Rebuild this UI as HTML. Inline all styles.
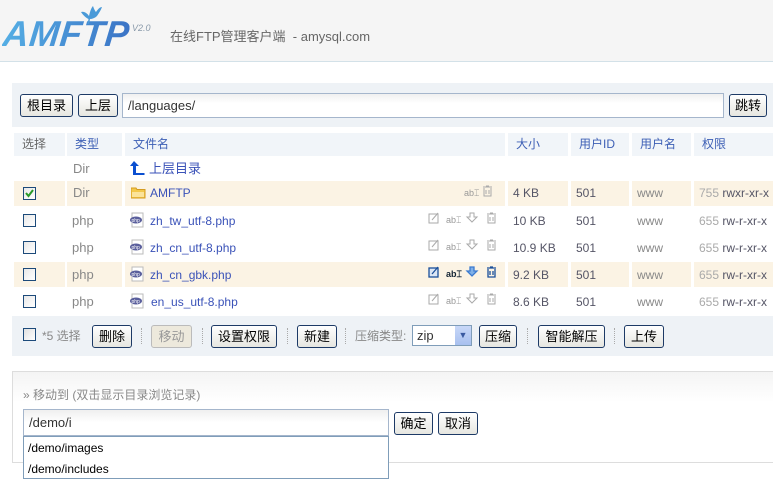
<!DOCTYPE html>
<html><head><meta charset="utf-8"><style>
*{margin:0;padding:0;box-sizing:border-box}
body{width:773px;height:497px;overflow:hidden;background:#fff;font-family:"Liberation Sans","Noto Sans CJK SC",sans-serif;font-size:12px;color:#333;position:relative}
.abs{position:absolute}
.hdr{left:0;top:0;width:773px;height:62px;background:#f5f5f5;border-bottom:1px solid #d3e1e8}
.logo{left:3px;top:14px;font-size:36px;font-weight:bold;font-style:italic;letter-spacing:0.5px;font-family:"Liberation Sans",sans-serif;line-height:40px;background:linear-gradient(90deg,#55aee4,#3b74c6);-webkit-background-clip:text;color:transparent;transform:skewX(-6deg)}
.btn{position:absolute;height:23px;border:1px solid #1d3a66;border-radius:3px;background:linear-gradient(#fff,#e6e6e0);font-size:13px;color:#000;text-align:center;line-height:21px}
.bar{background:#eef2f6}
.th{position:absolute;top:133px;height:23px;background:#f1f5f9;line-height:23px;padding-left:8px;color:#3d5fb5}
.hl{position:absolute;height:25px;background:#fbf3e4}
.cell{position:absolute;line-height:16px}
.g{color:#888}.b{color:#3a52b8}.s{color:#556}
.cb{position:absolute;left:23px;width:13px;height:13px;border:1px solid #1c4a7a;background:linear-gradient(135deg,#e8e8e8,#fff)}
.sep{position:absolute;top:328px;width:1px;height:16px;border-left:1px dotted #aaa}
</style></head><body>
<div class="abs hdr"></div>
<div class="abs logo">AMFTP</div>
<svg class="abs" style="left:78px;top:3px" width="26" height="22" viewBox="0 0 26 22"><path d="M3 9 C6 8 9 10 11 13 C12 9 13 5 15 3 C16 6 17 8 18 9 C20 6 22 4 24 4 C23 7 21 10 19 13 C17 15 14 16 12 16 L11 21 L9.5 21 L10.5 16 C8 15 5 12 3 9Z" fill="#4a9ad8"/></svg>
<div class="abs" style="left:132px;top:23px;font-size:9px;color:#8a9aaa;font-style:italic">V2.0</div>
<div class="abs" style="left:170px;top:26px;font-size:13px;color:#666">在线FTP管理客户端 &nbsp;- amysql.com</div>

<div class="abs bar" style="left:12px;top:83px;width:761px;height:44px"></div>
<div class="btn" style="left:20px;top:94px;width:53px">根目录</div>
<div class="btn" style="left:78px;top:94px;width:40px">上层</div>
<div class="abs" style="left:122px;top:93px;width:602px;height:25px;border:1px solid #a5b6cc;background:linear-gradient(#f0f0f0,#fff 40%);padding:4px 5px;font-size:13px;color:#333">/languages/</div>
<div class="btn" style="left:729px;top:94px;width:38px">跳转</div>

<div class="th" style="left:14px;width:51px;color:#666">选择</div>
<div class="th" style="left:67px;width:55px">类型</div>
<div class="th" style="left:125px;width:380px">文件名</div>
<div class="th" style="left:508px;width:60px">大小</div>
<div class="th" style="left:571px;width:58px">用户ID</div>
<div class="th" style="left:632px;width:59px">用户名</div>
<div class="th" style="left:694px;width:79px">权限</div>

<div class="cell g" style="left:73px;top:161px;font-size:13px">Dir</div>
<svg class="abs" style="left:129px;top:160px" width="18" height="16"><path d="M5 1 L10 6 L7 6 L7 13 L14 13 L14 15 L4 15 L4 6 L1 6Z" fill="#0b4fd0"/><rect x="11" y="13" width="1.5" height="2" fill="#0b4fd0"/><rect x="14" y="13" width="1.5" height="2" fill="#0b4fd0"/></svg>
<div class="cell b" style="left:149px;top:161px;font-size:13px">上层目录</div>

<div class="hl" style="left:14px;top:181px;width:51px"></div><div class="hl" style="left:67px;top:181px;width:55px"></div><div class="hl" style="left:125px;top:181px;width:380px"></div><div class="hl" style="left:508px;top:181px;width:60px"></div><div class="hl" style="left:571px;top:181px;width:58px"></div><div class="hl" style="left:632px;top:181px;width:59px"></div><div class="hl" style="left:694px;top:181px;width:79px"></div>
<div class="cb" style="top:187px"><svg width="11" height="11" style="position:absolute;left:0;top:0"><path d="M2 5 L4.5 8 L9 2" stroke="#2a9a2a" stroke-width="2" fill="none"/></svg></div>
<div class="cell g" style="left:73px;top:185px;font-size:13px">Dir</div>
<svg class="abs" style="left:131px;top:186px" width="15" height="13"><path d="M0 2 L5 2 L6 3.5 L14 3.5 L14 12 L0 12Z" fill="#f3c84b" stroke="#d49b20"/><rect x="1" y="6" width="12" height="5" fill="#fbe39a"/></svg>
<div class="cell b" style="left:150px;top:185px">AMFTP</div>

<div class="hl" style="left:14px;top:262px;width:51px"></div><div class="hl" style="left:67px;top:262px;width:55px"></div><div class="hl" style="left:125px;top:262px;width:380px"></div><div class="hl" style="left:508px;top:262px;width:60px"></div><div class="hl" style="left:571px;top:262px;width:58px"></div><div class="hl" style="left:632px;top:262px;width:59px"></div><div class="hl" style="left:694px;top:262px;width:79px"></div>

<div class="cb" style="top:214px"></div><div class="cb" style="top:241px"></div><div class="cb" style="top:268px"></div><div class="cb" style="top:295px"></div>

<div class="cell g" style="left:72px;top:213px;font-size:13px">php</div>
<div class="cell g" style="left:72px;top:240px;font-size:13px">php</div>
<div class="cell g" style="left:72px;top:267px;font-size:13px">php</div>
<div class="cell g" style="left:72px;top:294px;font-size:13px">php</div>

<svg class="abs" style="left:129px;top:212px" width="16" height="16"><rect x="3" y="1" width="11" height="14" fill="#fff" stroke="#bbb"/><ellipse cx="7" cy="8" rx="6" ry="3.5" fill="#5a5f9c"/><text x="2.5" y="10" font-size="5" fill="#fff" font-family="Liberation Sans">php</text></svg>
<svg class="abs" style="left:129px;top:239px" width="16" height="16"><rect x="3" y="1" width="11" height="14" fill="#fff" stroke="#bbb"/><ellipse cx="7" cy="8" rx="6" ry="3.5" fill="#5a5f9c"/><text x="2.5" y="10" font-size="5" fill="#fff" font-family="Liberation Sans">php</text></svg>
<svg class="abs" style="left:129px;top:266px" width="16" height="16"><rect x="3" y="1" width="11" height="14" fill="#fff" stroke="#bbb"/><ellipse cx="7" cy="8" rx="6" ry="3.5" fill="#5a5f9c"/><text x="2.5" y="10" font-size="5" fill="#fff" font-family="Liberation Sans">php</text></svg>
<svg class="abs" style="left:129px;top:293px" width="16" height="16"><rect x="3" y="1" width="11" height="14" fill="#fff" stroke="#bbb"/><ellipse cx="7" cy="8" rx="6" ry="3.5" fill="#5a5f9c"/><text x="2.5" y="10" font-size="5" fill="#fff" font-family="Liberation Sans">php</text></svg>

<div class="cell b" style="left:150px;top:213px">zh_tw_utf-8.php</div>
<div class="cell b" style="left:150px;top:240px">zh_cn_utf-8.php</div>
<div class="cell b" style="left:150px;top:267px">zh_cn_gbk.php</div>
<div class="cell b" style="left:151px;top:294px">en_us_utf-8.php</div>

<div class="cell" style="left:464px;top:185px;font-size:9px;color:#999">ab⌶</div>
<svg class="abs" style="left:482px;top:185px" width="11" height="12"><path d="M1 2 H10 M4 1 H7 M2 3 V11 H9 V3 M4 5 V9 M7 5 V9" stroke="#aaa" fill="none"/></svg>

<svg class="abs" style="left:428px;top:211px" width="70" height="96">
<g stroke="#aaa" fill="none">
<rect x="1" y="3" width="9" height="9"/><path d="M4 9 L10 2"/>
<path d="M59 3 H68 M62 2 H65 M60 4 V12 H67 V4 M62 6 V10 M65 6 V10"/>
<path d="M42 2 H46 V6 H49 L44 11 L39 6 H42Z"/>
<g transform="translate(0,27)"><rect x="1" y="3" width="9" height="9"/><path d="M4 9 L10 2"/><path d="M59 3 H68 M62 2 H65 M60 4 V12 H67 V4 M62 6 V10 M65 6 V10"/><path d="M42 2 H46 V6 H49 L44 11 L39 6 H42Z"/></g>
<g transform="translate(0,81)"><rect x="1" y="3" width="9" height="9"/><path d="M4 9 L10 2"/><path d="M59 3 H68 M62 2 H65 M60 4 V12 H67 V4 M62 6 V10 M65 6 V10"/><path d="M42 2 H46 V6 H49 L44 11 L39 6 H42Z"/></g>
</g>
<g transform="translate(0,54)" stroke="#1a4f9a" fill="none" stroke-width="1.3"><rect x="1" y="3" width="9" height="9" fill="#dbe6f5"/><path d="M4 9 L10 2"/><path d="M59 3 H68 M62 2 H65 M60 4 V12 H67 V4 M62 6 V10 M65 6 V10"/><path d="M42 2 H46 V6 H49 L44 11 L39 6 H42Z" fill="#7fb0e8" stroke="#3a7ad0"/></g>
</svg>
<div class="cell" style="left:446px;top:212px;font-size:9px;color:#999">ab⌶</div>
<div class="cell" style="left:446px;top:239px;font-size:9px;color:#999">ab⌶</div>
<div class="cell" style="left:446px;top:266px;font-size:9px;color:#123;font-weight:bold">ab⌶</div>
<div class="cell" style="left:446px;top:293px;font-size:9px;color:#999">ab⌶</div>

<div class="cell s" style="left:513px;top:185px">4 KB</div>
<div class="cell s" style="left:513px;top:213px">10 KB</div>
<div class="cell s" style="left:513px;top:240px">10.9 KB</div>
<div class="cell s" style="left:513px;top:267px">9.2 KB</div>
<div class="cell s" style="left:513px;top:294px">8.6 KB</div>
<div class="cell s" style="left:576px;top:185px">501</div>
<div class="cell s" style="left:576px;top:213px">501</div>
<div class="cell s" style="left:576px;top:240px">501</div>
<div class="cell s" style="left:576px;top:267px">501</div>
<div class="cell s" style="left:576px;top:294px">501</div>
<div class="cell g" style="left:637px;top:185px">www</div>
<div class="cell g" style="left:637px;top:213px">www</div>
<div class="cell g" style="left:637px;top:240px">www</div>
<div class="cell g" style="left:637px;top:267px">www</div>
<div class="cell g" style="left:637px;top:294px">www</div>
<div class="cell" style="left:699px;top:185px"><span style="color:#aaa">755</span> <span class="s">rwxr-xr-x</span></div>
<div class="cell" style="left:699px;top:213px"><span style="color:#aaa">655</span> <span class="s">rw-r-xr-x</span></div>
<div class="cell" style="left:699px;top:240px"><span style="color:#aaa">655</span> <span class="s">rw-r-xr-x</span></div>
<div class="cell" style="left:699px;top:267px"><span style="color:#aaa">655</span> <span class="s">rw-r-xr-x</span></div>
<div class="cell" style="left:699px;top:294px"><span style="color:#aaa">655</span> <span class="s">rw-r-xr-x</span></div>

<div class="abs bar" style="left:12px;top:316px;width:761px;height:40px"></div>
<div class="abs" style="left:23px;top:328px;width:13px;height:13px;border:1px solid #1c4a7a;background:linear-gradient(135deg,#e0e0e0,#fff)"></div>
<div class="cell" style="left:42px;top:328px;color:#888">*5 选择</div>
<div class="btn" style="left:92px;top:325px;width:40px">删除</div>
<div class="sep" style="left:141px"></div>
<div class="btn" style="left:151px;top:325px;width:41px;border-color:#bbb;color:#999;background:#ede9dc">移动</div>
<div class="sep" style="left:202px"></div>
<div class="btn" style="left:211px;top:325px;width:66px">设置权限</div>
<div class="sep" style="left:287px"></div>
<div class="btn" style="left:297px;top:325px;width:40px">新建</div>
<div class="sep" style="left:345px"></div>
<div class="cell" style="left:355px;top:328px;color:#888">压缩类型:</div>
<div class="abs" style="left:412px;top:325px;width:60px;height:21px;border:1px solid #7f9db9;background:#fff;padding:2px 4px;font-size:13px">zip</div>
<div class="abs" style="left:455px;top:326px;width:16px;height:19px;background:linear-gradient(#c8d8f8,#a8c0ef);color:#3a5aa0;font-size:9px;text-align:center;line-height:19px">▼</div>
<div class="btn" style="left:479px;top:325px;width:38px">压缩</div>
<div class="sep" style="left:527px"></div>
<div class="btn" style="left:538px;top:325px;width:67px">智能解压</div>
<div class="sep" style="left:614px"></div>
<div class="btn" style="left:624px;top:325px;width:40px">上传</div>

<div class="abs" style="left:12px;top:371px;width:761px;height:92px;border:1px solid #ddd;border-right:none;background:linear-gradient(#f4f4f4,#fff 30px)"></div>
<div class="cell" style="left:23px;top:387px;color:#888">» 移动到 (双击显示目录浏览记录)</div>
<div class="abs" style="left:23px;top:409px;width:366px;height:27px;border:1px solid #a5b6cc;background:linear-gradient(#efefef,#fff 50%);padding:5px 5px;font-size:13px;color:#333">/demo/i</div>
<div class="btn" style="left:394px;top:412px;width:39px">确定</div>
<div class="btn" style="left:438px;top:412px;width:40px">取消</div>
<div class="abs" style="left:23px;top:436px;width:366px;height:43px;border:1px solid #7f9db9;background:#fff"></div>
<div class="cell" style="left:28px;top:440px;color:#000">/demo/images</div>
<div class="cell" style="left:28px;top:461px;color:#000">/demo/includes</div>
</body></html>
